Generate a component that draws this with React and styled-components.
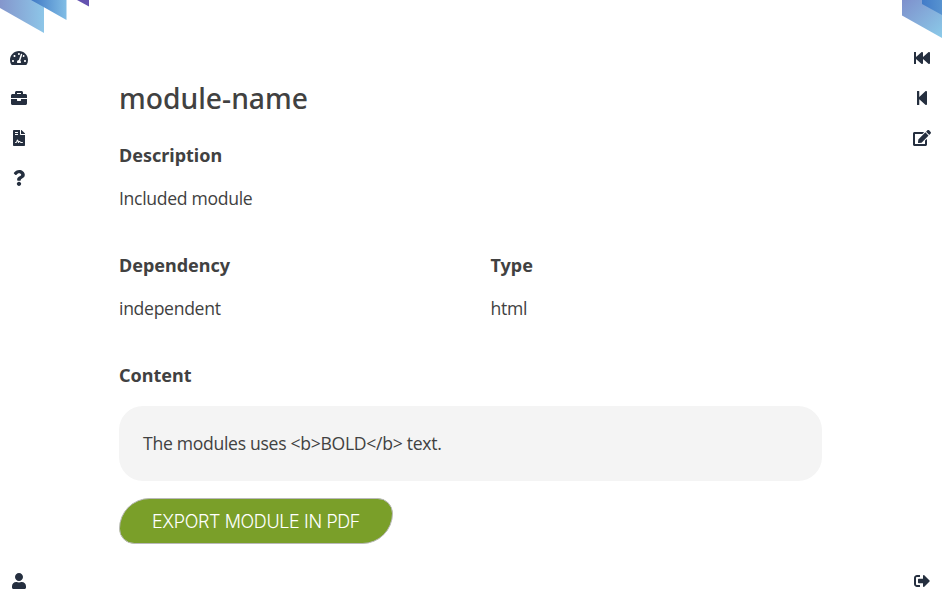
import React from 'react';
import styled, { createGlobalStyle } from 'styled-components';
import { FaTachometerAlt, FaBriefcase, FaFileContract, FaQuestion, FaUser, FaFastBackward, FaStepBackward, FaEdit, FaSignOutAlt } from 'react-icons/fa';

const Global = createGlobalStyle`
  * { box-sizing: border-box; }
  body { margin: 0; background: #fff; color: #414141; font-family: "Noto Sans", sans-serif; overflow: hidden; }
`;
const Page = styled.div`display: grid; grid-template-columns: 119px 703px 1fr; height: 601px; position: relative;`;
const Corner = styled.svg`position: absolute; top: 0; ${p => p.$right ? 'right: 0;' : 'left: 0;'}`;
const Rail = styled.nav`
  display: flex; flex-direction: column; align-items: ${p => p.$right ? 'flex-end' : 'flex-start'};
  padding: 38px ${p => p.$right ? 1 : 0}px 0 0; color: #252f3f; font-size: 16px;
`;
const RailButton = styled.button`
  width: 38px; height: 40px; padding: 0; border: 0; background: none; color: inherit; font-size: inherit;
  display: flex; align-items: center; justify-content: center;
  svg { width: ${p => p.$wide ? 18 : 16}px; height: 16px; }
  &:last-child { margin-top: auto; }
`;
const Main = styled.main`padding-top: 77px;`;
const Title = styled.h1`margin: 0 0 16px; font-size: 28.25px; font-weight: 500; line-height: 42px;`;
const Columns = styled.div`display: grid; grid-template-columns: 371.5px 1fr;`;
const Field = styled.section`height: 110px;`;
const Label = styled.h2`margin: 0; font-size: 18px; line-height: 40px; font-weight: 700;`;
const Text = styled.p`margin: 7px 0 0; font-family: "Open Sans", sans-serif; font-size: 17.6px; letter-spacing: -.31px; line-height: 32px;`;
const Content = styled.div`height: 75px; margin-top: 11px; padding: 0 24px; border-radius: 24px; background: #f4f4f4; font-family: "Open Sans", sans-serif; font-size: 17.6px; letter-spacing: -.3px; line-height: 75px;`;
const Export = styled.button`
  margin-top: 17px; display: block; width: 274px; height: 46px; border: 1px solid #b9b9b9; border-radius: 32px 16px; padding: 0;
  background: #7a9f29; color: #fff; font: 300 18px Inter, sans-serif; letter-spacing: -.38px;
`;

export default function App() {
  return (
    <Page>
      <Global />
      <Corner width="90" height="34" aria-hidden="true">
        <defs>
          <linearGradient id="leftPale"><stop stopColor="#8496cc" /><stop offset="1" stopColor="#8dc6e8" /></linearGradient>
          <linearGradient id="leftBlue"><stop stopColor="#4079c5" /><stop offset="1" stopColor="#81bde5" /></linearGradient>
        </defs>
        <path fill="url(#leftPale)" d="M0 0H44V33L0 8Z" />
        <path fill="url(#leftBlue)" d="M31 0H66.5V20L44 7.3Z" />
        <path fill="#6453b0" d="M77 0H89V6.5Z" />
      </Corner>
      <Corner $right width="40" height="39" aria-hidden="true">
        <defs>
          <linearGradient id="rightPale" x2="1" y2="1"><stop stopColor="#7e90cc" /><stop offset="1" stopColor="#8bcbe9" /></linearGradient>
          <linearGradient id="rightBlue"><stop stopColor="#427bc8" /><stop offset="1" stopColor="#5793d0" /></linearGradient>
        </defs>
        <path fill="url(#rightPale)" d="M0 0H40V38L0 15.5Z" />
        <path fill="url(#rightBlue)" d="M20 0H40V15L20 4Z" />
      </Corner>
      <Rail>
        <RailButton $wide><FaTachometerAlt /></RailButton>
        <RailButton><FaBriefcase /></RailButton>
        <RailButton><FaFileContract /></RailButton>
        <RailButton><FaQuestion /></RailButton>
        <RailButton><FaUser /></RailButton>
      </Rail>
      <Main>
        <Title>module-name</Title>
        <Field><Label>Description</Label><Text>Included module</Text></Field>
        <Columns>
          <Field><Label>Dependency</Label><Text>independent</Text></Field>
          <Field><Label>Type</Label><Text>html</Text></Field>
        </Columns>
        <Label>Content</Label>
        <Content>The modules uses &lt;b&gt;BOLD&lt;/b&gt; text.</Content>
        <Export>EXPORT MODULE IN PDF</Export>
      </Main>
      <Rail $right>
        <RailButton><FaFastBackward /></RailButton>
        <RailButton><FaStepBackward /></RailButton>
        <RailButton $wide><FaEdit /></RailButton>
        <RailButton><FaSignOutAlt /></RailButton>
      </Rail>
    </Page>
  );
}
